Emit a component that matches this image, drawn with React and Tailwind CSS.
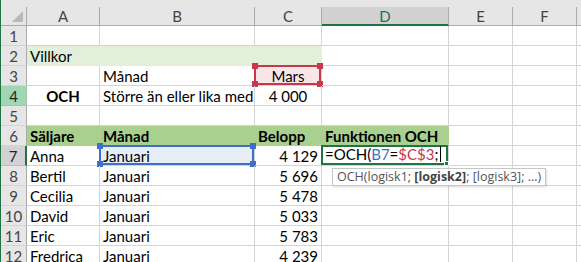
import React from "react";

const COLS = [
  { key: "A", w: 73 },
  { key: "B", w: 155 },
  { key: "C", w: 67 },
  { key: "D", w: 127 },
  { key: "E", w: 64 },
  { key: "F", w: 64 },
  { key: "G", w: 40, blank: true },
];

const LIGHT = "bg-[#e2efda] border-transparent";
const HEAD = "bg-[#a9d08e] border-transparent font-bold";

// cell spec: { t: text, a: align, cls: extra classes, sel: selection frame }
const ROWS = [
  { n: 1, cells: {} },
  { n: 2, cells: { A: { t: "Villkor", cls: LIGHT }, B: { cls: LIGHT }, C: { cls: LIGHT } } },
  { n: 3, cells: { B: { t: "Månad" }, C: { t: "Mars", a: "c", cls: "bg-[#f9e5e7]", sel: "red" } } },
  {
    n: 4,
    hl: "ref",
    cells: { A: { t: "OCH", a: "c", cls: "font-bold" }, B: { t: "Större än eller lika med" }, C: { t: "4 000", a: "c" } },
  },
  { n: 5, cells: {} },
  {
    n: 6,
    cells: {
      A: { t: "Säljare", cls: HEAD },
      B: { t: "Månad", cls: HEAD },
      C: { t: "Belopp", cls: HEAD },
      D: { t: "Funktionen OCH", cls: HEAD },
    },
  },
  {
    n: 7,
    hl: "active",
    cells: {
      A: { t: "Anna" },
      B: { t: "Januari", cls: "bg-[#e8eef8]", sel: "blue" },
      C: { t: "4 129", a: "r" },
      D: { formula: true },
    },
  },
  { n: 8, cells: { A: { t: "Bertil" }, B: { t: "Januari" }, C: { t: "5 696", a: "r" } } },
  { n: 9, cells: { A: { t: "Cecilia" }, B: { t: "Januari" }, C: { t: "5 478", a: "r" } } },
  { n: 10, cells: { A: { t: "David" }, B: { t: "Januari" }, C: { t: "5 033", a: "r" } } },
  { n: 11, cells: { A: { t: "Eric" }, B: { t: "Januari" }, C: { t: "5 783", a: "r" } } },
  { n: 12, cells: { A: { t: "Fredrica" }, B: { t: "Januari" }, C: { t: "4 239", a: "r" } } },
];

const FRAME = {
  red: { border: "border-[#c6394a]", dot: "bg-[#c6394a]" },
  blue: { border: "border-[#3e70c4]", dot: "bg-[#3e70c4]" },
};

// range-reference frame with the four corner grips
function SelFrame({ color }) {
  const f = FRAME[color];
  return (
    <div className={`pointer-events-none absolute -left-px -top-px -right-0 -bottom-0 border-2 ${f.border}`}>
      <div className={`absolute -left-[4px] -top-[4px] h-[6px] w-[6px] ${f.dot}`} />
      <div className={`absolute -right-[4px] -top-[4px] h-[6px] w-[6px] ${f.dot}`} />
      <div className={`absolute -left-[4px] -bottom-[4px] h-[6px] w-[6px] ${f.dot}`} />
      <div className={`absolute -right-[4px] -bottom-[4px] h-[6px] w-[6px] ${f.dot}`} />
    </div>
  );
}

function FormulaCell({ w }) {
  return (
    <div style={{ width: w }} className="relative h-full shrink-0 border-b border-r border-[#d4d4d4]">
      <div className="absolute -left-px -top-px -right-0 -bottom-0 z-20 flex items-end whitespace-nowrap border-2 border-[#217346] bg-white px-[2px] leading-[18px]">
        <span>=OCH(</span>
        <span className="text-[#3e70c4]">B7</span>
        <span>=</span>
        <span className="text-[#c6394a]">$C$3</span>
        <span>;</span>
        <span className="mb-[1px] ml-[2px] h-[16px] w-px bg-black" />
        <div className="absolute -right-[3px] -bottom-[3px] h-[5px] w-[5px] border border-white bg-[#217346]" />
      </div>
      {/* function argument tip */}
      <div
        className="absolute left-[10px] top-[22px] z-30 flex h-[18px] items-center whitespace-nowrap border border-[#c6c6c6] bg-white px-[4px] text-[12.5px] text-[#555] shadow-[1px_1px_2px_rgba(0,0,0,0.15)]"
        style={{ fontFamily: "'Open Sans', 'Noto Sans', sans-serif" }}
      >
        <span>OCH(logisk1;&nbsp;</span>
        <span className="font-bold text-[#444]">[logisk2]</span>
        <span>;&nbsp;[logisk3];&nbsp;...)</span>
      </div>
    </div>
  );
}

function Cell({ w, spec }) {
  const { t = "", a = "l", cls = "", sel } = spec || {};
  const justify = a === "c" ? "justify-center" : a === "r" ? "justify-end" : "justify-start";
  return (
    <div
      style={{ width: w }}
      className={`relative flex h-full shrink-0 items-end whitespace-nowrap border-b border-r border-[#d4d4d4] px-[3px] leading-[18px] ${justify} ${cls}`}
    >
      <span className="relative z-10">{t}</span>
      {sel && <SelFrame color={sel} />}
    </div>
  );
}

function RowHeader({ n, hl }) {
  const base = "flex h-full w-[26px] shrink-0 items-end justify-center border-b leading-[18px]";
  if (hl === "active")
    return (
      <div className={`${base} border-r-2 border-b-[#bdbdbd] border-r-[#217346] bg-[#d2d2d2] text-[#222]`}>{n}</div>
    );
  if (hl === "ref")
    return <div className={`${base} border-r border-[#9ccab0] bg-[#a0d6b4] text-[#222]`}>{n}</div>;
  return (
    <div className={`${base} border-r border-b-[#d4d4d4] border-r-[#ababab] bg-[#e6e6e6] text-[#444]`}>{n}</div>
  );
}

export default function App() {
  return (
    <div
      className="h-[262px] w-[581px] overflow-hidden border-l border-[#217346] bg-white text-[15px] text-black"
      style={{ fontFamily: "Lato, 'Liberation Sans', sans-serif" }}
    >
      <div className="h-[7px] bg-[#e6e6e6]" />

      {/* column headers */}
      <div className="flex h-[19px] bg-[#e6e6e6] text-[#444]">
        <div className="flex h-full w-[26px] shrink-0 items-end justify-end border-b border-r border-[#ababab] p-[3px]">
          <svg width="11" height="11" viewBox="0 0 11 11">
            <path d="M11 0 L11 11 L0 11 Z" fill="#b9b9b9" />
          </svg>
        </div>
        {COLS.map((c) => (
          <div
            key={c.key}
            style={{ width: c.w }}
            className={
              c.key === "D"
                ? "flex shrink-0 items-center justify-center border-b-2 border-r border-b-[#217346] border-r-[#ababab] bg-[#d2d2d2] pt-[1px] text-[#217346]"
                : "flex shrink-0 items-center justify-center border-b border-r border-[#ababab] pt-[1px]"
            }
          >
            {c.blank ? "" : c.key}
          </div>
        ))}
      </div>

      {/* rows */}
      {ROWS.map((r) => (
        <div key={r.n} className="flex h-[20px]">
          <RowHeader n={r.n} hl={r.hl} />
          {COLS.map((c) =>
            r.cells[c.key]?.formula ? (
              <FormulaCell key={c.key} w={c.w} />
            ) : (
              <Cell key={c.key} w={c.w} spec={r.cells[c.key]} />
            )
          )}
        </div>
      ))}
    </div>
  );
}
